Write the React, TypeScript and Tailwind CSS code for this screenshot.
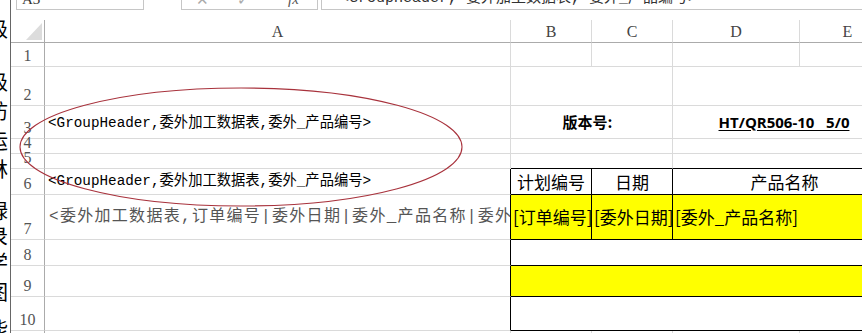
const gridLine = "border-r border-b border-[#dadada]";
const serif = "font-['Liberation_Serif','Noto_Sans_CJK_SC',serif]";
const mono = "font-['Liberation_Mono','Noto_Sans_CJK_SC',monospace]";
const sans = "font-['Noto_Sans_CJK_SC','Liberation_Sans',sans-serif]";

const sideChars: [string, string][] = [
  ["级", "mt-[19px]"],
  ["级", "mt-[33px]"],
  ["防", "mt-[9px]"],
  ["运", "mt-[10px]"],
  ["林", "mt-[8px]"],
  ["绿", "mt-[22px]"],
  ["录", "mt-[5px]"],
  ["学", "mt-[6px]"],
  ["图", "mt-[10px]"],
  ["能", "mt-[17px]"],
];

function SideStrip() {
  return (
    <div className="w-[11px] shrink-0 border-r border-[#666] overflow-hidden flex flex-col">
      {sideChars.map(([ch, mt], i) => (
        <span key={i} className={`${mt} -ml-[12px] h-[20px] text-[20px] leading-[20px] text-black ${sans}`}>
          {ch}
        </span>
      ))}
    </div>
  );
}

function FormulaBar() {
  return (
    <div className="h-[20px] shrink-0 flex items-start">
      <div className="ml-[5px] w-[128px] h-[10px] border border-t-0 border-[#c6c6c6] overflow-hidden">
        <div className={`-mt-[10px] pl-[5px] text-[15px] leading-[18px] text-[#333] ${serif}`}>A3</div>
      </div>
      <div className="ml-[37px] w-[137px] h-[10px] border border-t-0 border-[#c6c6c6] overflow-hidden flex text-[#aaa]">
        <span className="-mt-[10px] ml-[14px] text-[15px] leading-[18px]">✕</span>
        <span className="-mt-[10px] ml-[28px] text-[15px] leading-[18px]">✓</span>
        <span className={`-mt-[10px] ml-[38px] text-[15px] leading-[18px] italic text-[#555] ${serif}`}>fx</span>
      </div>
      <div className="ml-[3px] flex-1 h-[10px] border border-t-0 border-r-0 border-[#c6c6c6] overflow-hidden">
        <div className={`-mt-[10px] pl-[18px] whitespace-nowrap text-[15px] leading-[18px] text-[#333] ${mono}`}>
          &lt;GroupHeader, 委外加工数据表, 委外_产品编号&gt;
        </div>
      </div>
    </div>
  );
}

function RowNum({ n }: { n: number }) {
  return (
    <div
      className={`flex items-end justify-center border-r border-b border-r-[#ababab] border-b-[#dadada] pb-[2px] text-[16px] leading-none text-[#555] ${serif}`}
    >
      {n}
    </div>
  );
}

function ColHead({ label }: { label: string }) {
  return (
    <div
      className={`flex items-center justify-center pt-[2px] border-r border-b border-r-[#dadada] border-b-[#ababab] text-[16px] text-[#444] ${serif}`}
    >
      {label}
    </div>
  );
}

function Sheet() {
  return (
    <div className="grid grid-cols-[34px_466px_81px_81px_127px_96px] grid-rows-[23px_24px_39px_33px_15px_15px_26px_45px_26px_31px_34px_20px]">
      {/* header row */}
      <div className="relative border-r border-b border-[#ababab]">
        <svg className="absolute right-[2px] bottom-[2px]" width="16" height="17" viewBox="0 0 16 17">
          <polygon points="16,0 16,17 0,17" fill="#dcdcdc" />
        </svg>
      </div>
      <ColHead label="A" />
      <ColHead label="B" />
      <ColHead label="C" />
      <ColHead label="D" />
      <ColHead label="E" />

      {/* row 1 */}
      <RowNum n={1} />
      <div className={gridLine} />
      <div className={gridLine} />
      <div className={gridLine} />
      <div className={gridLine} />
      <div className={gridLine} />

      {/* row 2 */}
      <RowNum n={2} />
      <div className={gridLine} />
      <div className={`col-span-2 ${gridLine}`} />
      <div className={`col-span-2 ${gridLine}`} />

      {/* row 3 */}
      <RowNum n={3} />
      <div className={`${gridLine} flex items-center pl-[3px] pt-[3px] whitespace-nowrap text-[14.3px] text-black ${mono}`}>
        &lt;GroupHeader,委外加工数据表,委外_产品编号&gt;
      </div>
      <div className={`col-span-2 ${gridLine} flex items-center justify-center pr-[8px] text-[15px] font-bold text-black ${sans}`}>
        版本号:
      </div>
      <div className={`col-span-2 ${gridLine} flex items-center justify-center whitespace-pre text-[15px] font-bold underline underline-offset-2 text-black font-['Open_Sans',sans-serif]`}>
        HT/QR506-10   5/0
      </div>

      {/* row 4 */}
      <RowNum n={4} />
      <div className={gridLine} />
      <div className={`col-span-2 ${gridLine}`} />
      <div className={`col-span-2 ${gridLine}`} />

      {/* row 5 */}
      <RowNum n={5} />
      <div className={gridLine} />
      <div className="col-span-2 border-r border-b border-r-[#dadada] border-b-black" />
      <div className="col-span-2 border-b border-black" />

      {/* row 6 */}
      <RowNum n={6} />
      <div className={`border-r border-b border-r-black border-b-[#dadada] flex items-end pb-[2px] pl-[3px] whitespace-nowrap text-[14.3px] text-black ${mono}`}>
        &lt;GroupHeader,委外加工数据表,委外_产品编号&gt;
      </div>
      <div className={`border-r border-b border-black flex items-center justify-center text-[17px] text-black ${sans}`}>计划编号</div>
      <div className={`border-r border-b border-black flex items-center justify-center text-[17px] text-black ${sans}`}>日期</div>
      <div className={`col-span-2 border-b border-black flex items-center justify-center text-[17px] text-black ${sans}`}>产品名称</div>

      {/* row 7 */}
      <RowNum n={7} />
      <div className={`border-r border-b border-r-black border-b-[#dadada] overflow-hidden flex items-center pl-[4px] whitespace-nowrap text-[16px] tracking-[1.3px] text-[#555] ${mono}`}>
        &lt;委外加工数据表,订单编号|委外日期|委外_产品名称|委外_产品编号&gt;
      </div>
      <div className={`bg-[#ffff00] border-r border-b border-black overflow-hidden flex items-center pl-[2px] whitespace-nowrap text-[17px] text-black ${sans}`}>[订单编号]</div>
      <div className={`bg-[#ffff00] border-r border-b border-black overflow-hidden flex items-center pl-[2px] whitespace-nowrap text-[17px] text-black ${sans}`}>[委外日期]</div>
      <div className={`col-span-2 bg-[#ffff00] border-b border-black flex items-center pl-[2px] whitespace-nowrap text-[17px] text-black ${sans}`}>[委外_产品名称]</div>

      {/* row 8 */}
      <RowNum n={8} />
      <div className="border-r border-b border-r-black border-b-[#dadada]" />
      <div className="col-span-4 border-b border-black" />

      {/* row 9 */}
      <RowNum n={9} />
      <div className="border-r border-b border-r-black border-b-[#dadada]" />
      <div className="col-span-4 bg-[#ffff00] border-b border-black" />

      {/* row 10 */}
      <RowNum n={10} />
      <div className="border-r border-b border-r-black border-b-[#dadada]" />
      <div className="col-span-4 border-b border-black" />

      {/* row 11 */}
      <RowNum n={11} />
      <div className={gridLine} />
      <div className={gridLine} />
      <div className={gridLine} />
      <div className={gridLine} />
      <div className={gridLine} />
    </div>
  );
}

export default function App() {
  return (
    <div className="relative w-[862px] h-[333px] overflow-hidden bg-white flex">
      <SideStrip />
      <div className="w-[885px] shrink-0 flex flex-col">
        <FormulaBar />
        <Sheet />
      </div>
      {/* hand-drawn ellipse marking the group headers */}
      <svg className="absolute left-0 top-0 pointer-events-none" width="862" height="333">
        <ellipse cx="241" cy="147" rx="221" ry="59" fill="none" stroke="#a8323c" strokeWidth="1.1" />
      </svg>
    </div>
  );
}
